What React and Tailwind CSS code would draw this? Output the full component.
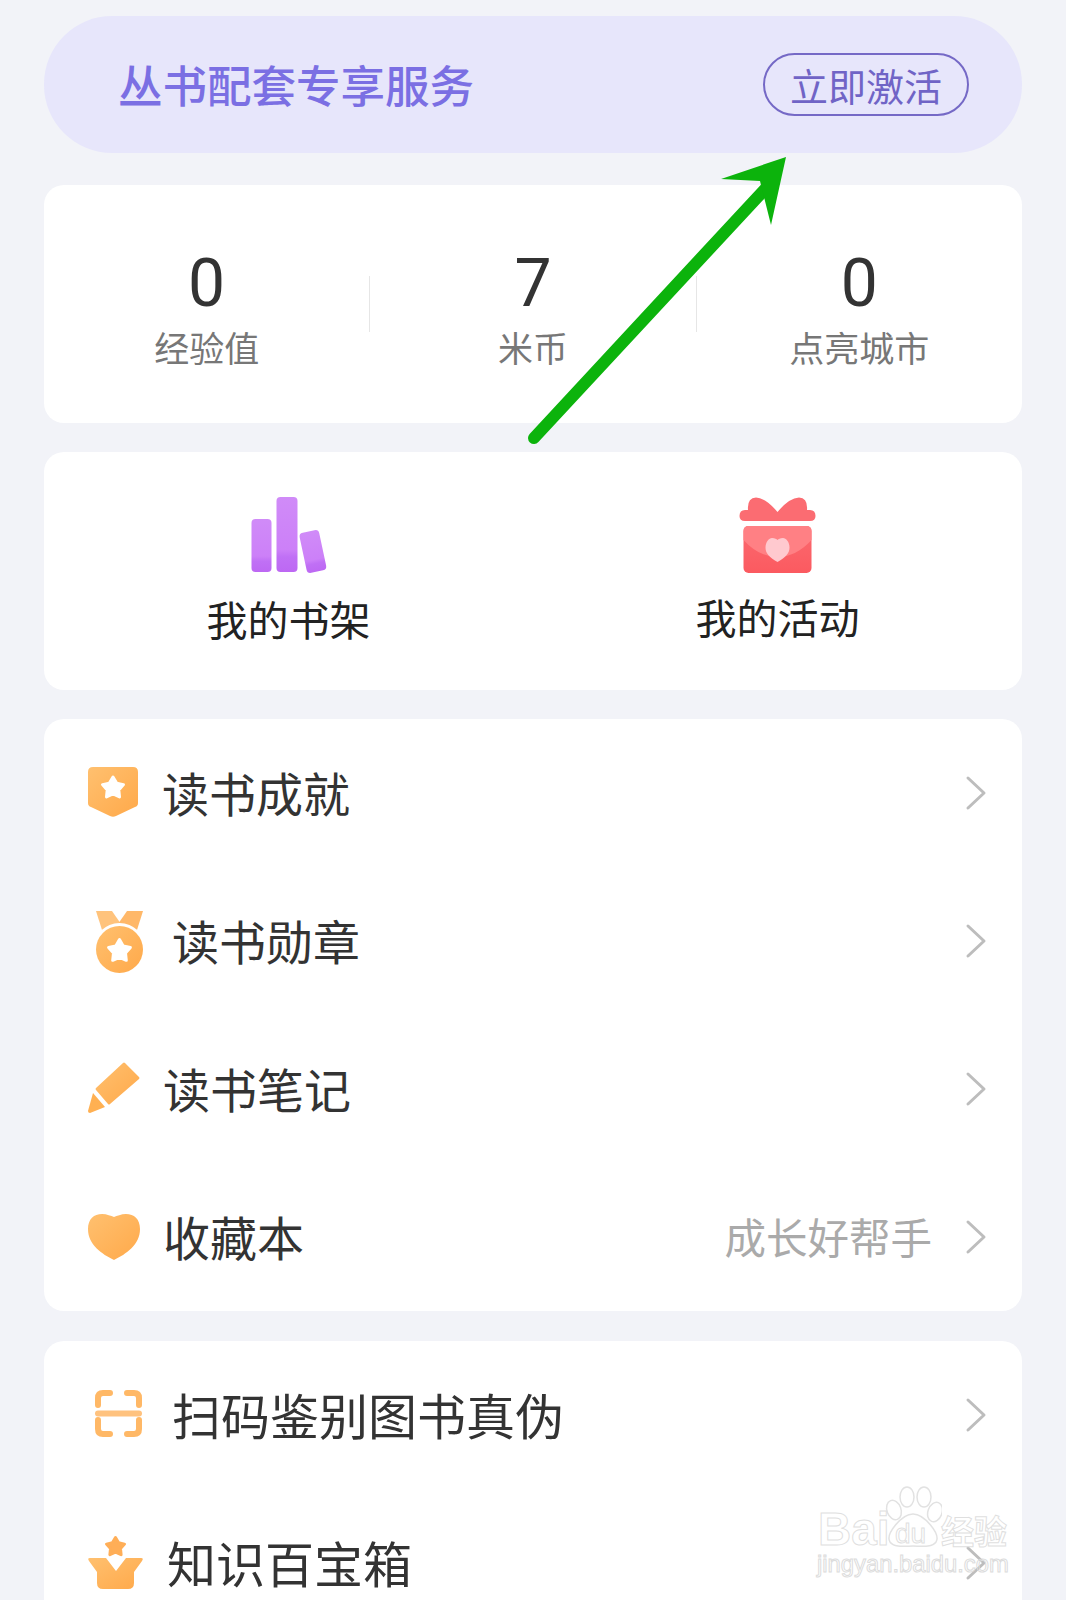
import React from "react";

const cjk = "font-['Noto_Sans_CJK_SC','Noto_Sans',sans-serif]";

const Grad = ({ id, a = "#ffc06f", b = "#ffa94a" }) => (
  <defs>
    <linearGradient id={id} x1="0" y1="0" x2="1" y2="1">
      <stop offset="0" stopColor={a} />
      <stop offset="1" stopColor={b} />
    </linearGradient>
  </defs>
);

const star = (cx, cy, r, fill) => {
  const pts = [];
  for (let i = 0; i < 10; i++) {
    const rad = i % 2 === 0 ? r : r * 0.55;
    const ang = -Math.PI / 2 + (i * Math.PI) / 5;
    pts.push(`${(cx + rad * Math.cos(ang)).toFixed(1)},${(cy + rad * Math.sin(ang)).toFixed(1)}`);
  }
  return <polygon points={pts.join(" ")} fill={fill} stroke={fill} strokeWidth="3" strokeLinejoin="round" />;
};

const IconBox = ({ children }) => (
  <svg viewBox="0 0 60 64" className="w-[60px] h-[64px] shrink-0">{children}</svg>
);

const Shield = () => (
  <IconBox>
    <Grad id="g1" />
    <path d="M5 6H45Q50 6 50 11V42Q50 45 47 46L28 55Q25 56.5 22 55L3 46Q0 45 0 42V11Q0 6 5 6Z" fill="url(#g1)" />
    {star(25, 27, 11, "#fff")}
  </IconBox>
);

const Medal = () => (
  <IconBox>
    <Grad id="g2" />
    <path d="M8 2H24L33 15L14 21Z" fill="#ffc37c" />
    <path d="M55 2H39L30 15L49 21Z" fill="#ffb869" />
    <circle cx="31.5" cy="40" r="26" fill="#fff" />
    <circle cx="31.5" cy="40.5" r="23.5" fill="url(#g2)" />
    {star(31.5, 42, 11.5, "#fff")}
  </IconBox>
);

const Pencil = () => (
  <IconBox>
    <Grad id="g3" />
    <path d="M37 6L51 20Q52 21 51 22L22 47Q21 48 20 47L8 33Q7 32 8 31L35 6Q36 5 37 6Z" fill="url(#g3)" />
    <path d="M5 36L17 50L2 56Q0 56 0 54Z" fill="#ffb052" />
  </IconBox>
);

const Heart = () => (
  <IconBox>
    <Grad id="g4" />
    <path d="M26 55C14 49 0 40 0 24C0 14 6 9 14 9C19 9 23 11 26 12C29 11 33 9 38 9C46 9 52 14 52 24C52 40 38 49 26 55Z" fill="url(#g4)" />
  </IconBox>
);

const Scan = () => (
  <IconBox>
    <g fill="none" stroke="#ffb866" strokeWidth="6" strokeLinecap="round">
      <path d="M22 10H15Q10 10 10 15V22" />
      <path d="M39 10H46Q51 10 51 15V22" />
      <path d="M10 37V46Q10 51 15 51H22" />
      <path d="M51 37V46Q51 51 46 51H39" />
      <path d="M10 30.5H51" stroke="#ffc27e" strokeWidth="6" />
    </g>
  </IconBox>
);

const Box = () => (
  <IconBox>
    <Grad id="g6" />
    {star(27.5, 16, 9.5, "#ffae57")}
    <path d="M2 27H18L28 40L38 27H53Q56 27 54 30L46 41V52Q46 58 40 58H15Q9 58 9 52V41L1 30Q-1 27 2 27Z" fill="url(#g6)" />
  </IconBox>
);

const Books = () => (
  <svg viewBox="0 0 80 80" className="w-[80px] h-[80px]">
    <defs>
      <linearGradient id="bk" x1="0" y1="0" x2="0" y2="1">
        <stop offset="0" stopColor="#d08bf8" />
        <stop offset="0.7" stopColor="#cc80f8" />
        <stop offset="0.8" stopColor="#c070f5" />
        <stop offset="1" stopColor="#bd68f3" />
      </linearGradient>
    </defs>
    <rect x="2.5" y="22" width="20" height="53" rx="4" fill="url(#bk)" />
    <rect x="27.5" y="0" width="21" height="75" rx="4" fill="url(#bk)" />
    <rect x="54" y="34" width="20" height="41" rx="4" fill="url(#bk)" transform="rotate(-12 64 55)" />
  </svg>
);

const Gift = () => (
  <svg viewBox="0 0 80 80" className="w-[80px] h-[80px]">
    <defs>
      <linearGradient id="gf" x1="0" y1="0" x2="0" y2="1">
        <stop offset="0" stopColor="#fb6a70" />
        <stop offset="1" stopColor="#fb5a60" />
      </linearGradient>
    </defs>
    <path d="M7 24Q1.5 24 1.5 19Q1.5 13 7 13H10Q9 1 18 0.5Q28 1 39.5 15Q51 1 61 0.5Q70 1 69 13H72Q77.5 13 77.5 19Q77.5 24 72 24Z" fill="#fb6c72" />
    <rect x="5.5" y="29" width="68" height="47" rx="5" fill="url(#gf)" />
    <path d="M5.5 34Q5.5 29 10.5 29H68.5Q73.5 29 73.5 34V43Q58 60 39.5 60Q21 60 5.5 43Z" fill="#ff8084" />
    <path d="M39.5 65C31 60 27.5 56 27.5 50.5C27.5 45 31 41 34 41C37 41 38.5 42 39.5 43C40.5 42 42 41 45 41C48 41 51.5 45 51.5 50.5C51.5 56 48 60 39.5 65Z" fill="#ffc9cf" />
  </svg>
);

const Chevron = () => (
  <svg viewBox="0 0 24 36" className="w-[24px] h-[36px] shrink-0" fill="none" stroke="#bdbdbd" strokeWidth="3" strokeLinecap="round" strokeLinejoin="round">
    <path d="M4 3L20 18L4 33" />
  </svg>
);

const Row = ({ icon, label, offset, size = "text-[47px]", hint }) => (
  <div className="h-[148px] flex items-center pl-[44px] pr-[34px]">
    {icon}
    <span className={`${offset} ${size} leading-none text-[#333] pb-[4px]`}>{label}</span>
    <div className="ml-auto flex items-center gap-[32px]">
      {hint && <span className="text-[41.5px] leading-none text-[#aaa]">{hint}</span>}
      <Chevron />
    </div>
  </div>
);

const Stat = ({ value, label }) => (
  <div className="flex-1 flex flex-col items-center pt-[12px]">
    <div className="font-['Roboto',sans-serif] text-[66px] leading-[66px] text-[#333]">{value}</div>
    <div className="mt-[8px] text-[35px] leading-[44px] text-[#777]">{label}</div>
  </div>
);

export default function App() {
  return (
    <div className={`${cjk} relative w-[1066px] h-[1600px] overflow-hidden bg-[#f2f3f8] px-[44px] pt-[16px]`}>
      <div className="h-[137px] rounded-[68px] bg-[#e7e6fb] flex items-center justify-between pl-[74px] pr-[53px]">
        <span className="text-[44.5px] leading-none font-medium text-[#7b6fe3] pb-[1px]">丛书配套专享服务</span>
        <span className="w-[206px] h-[63px] rounded-full border-2 border-[#7569c6] flex items-center justify-center text-[38px] leading-none text-[#7064c6]">立即激活</span>
      </div>

      <div className="mt-[32px] h-[238px] rounded-[20px] bg-white flex items-center">
        <Stat value="0" label="经验值" />
        <div className="w-px h-[56px] bg-[#e6e6e6]" />
        <Stat value="7" label="米币" />
        <div className="w-px h-[56px] bg-[#e6e6e6]" />
        <Stat value="0" label="点亮城市" />
      </div>

      <div className="mt-[29px] h-[238px] rounded-[20px] bg-white grid grid-cols-2 pt-[45px]">
        <div className="flex flex-col items-center">
          <Books />
          <span className="mt-[12px] text-[41px] leading-[58px] text-[#222]">我的书架</span>
        </div>
        <div className="flex flex-col items-center">
          <Gift />
          <span className="mt-[10px] text-[41px] leading-[58px] text-[#222]">我的活动</span>
        </div>
      </div>

      <div className="mt-[29px] rounded-[20px] bg-white">
        <Row icon={<Shield />} label="读书成就" offset="ml-[14px]" />
        <Row icon={<Medal />} label="读书勋章" offset="ml-[24px]" />
        <Row icon={<Pencil />} label="读书笔记" offset="ml-[15px]" />
        <Row icon={<Heart />} label="收藏本" offset="ml-[15px]" hint="成长好帮手" />
      </div>

      <div className="mt-[30px] rounded-[20px] bg-white">
        <Row icon={<Scan />} label="扫码鉴别图书真伪" offset="ml-[24px]" size="text-[49px]" />
        <Row icon={<Box />} label="知识百宝箱" offset="ml-[19px]" size="text-[49px]" />
      </div>

      {/* annotation arrow */}
      <svg className="absolute left-0 top-0 w-[1066px] h-[1600px] pointer-events-none" viewBox="0 0 1066 1600">
        <path d="M534 438L766 188" stroke="#0cb30c" strokeWidth="12" strokeLinecap="round" fill="none" />
        <path d="M786 157L721 179L760 181L771 225Z" fill="#0cb30c" />
      </svg>

      {/* watermark */}
      <div className="absolute left-[816px] top-[1484px] w-[196px] h-[96px] pointer-events-none">
        <svg className="absolute left-[68px] top-[2px] w-[58px] h-[62px]" viewBox="0 0 58 62" fill="#fff" stroke="#e2e2e2" strokeWidth="1.5">
          <ellipse cx="10" cy="24" rx="7" ry="10" transform="rotate(-20 10 24)" />
          <ellipse cx="23" cy="11" rx="7" ry="10" />
          <ellipse cx="40" cy="11" rx="7" ry="10" />
          <ellipse cx="51" cy="26" rx="7" ry="10" transform="rotate(20 51 26)" />
          <path d="M29 28C40 28 57 48 52 56C48 62 36 60 29 60C22 60 10 62 6 56C1 48 18 28 29 28Z" />
        </svg>
        <span className="absolute left-[2px] top-[21px] font-['Liberation_Sans',sans-serif] text-[46px] leading-[48px] font-bold text-transparent [-webkit-text-stroke:1px_#dfdfdf]">Bai</span>
        <span className="absolute left-[79px] top-[36px] font-['Liberation_Sans',sans-serif] text-[28px] leading-[28px] text-transparent [-webkit-text-stroke:1px_#dfdfdf]">du</span>
        <span className="absolute left-[125px] top-[26px] text-[33px] leading-[40px] font-bold text-transparent [-webkit-text-stroke:1px_#dfdfdf]">经验</span>
        <span className="absolute left-[1px] top-[66px] font-['Liberation_Sans',sans-serif] text-[23.8px] leading-[28px] text-transparent [-webkit-text-stroke:1px_#dcdcdc]">jingyan.baidu.com</span>
      </div>
    </div>
  );
}
